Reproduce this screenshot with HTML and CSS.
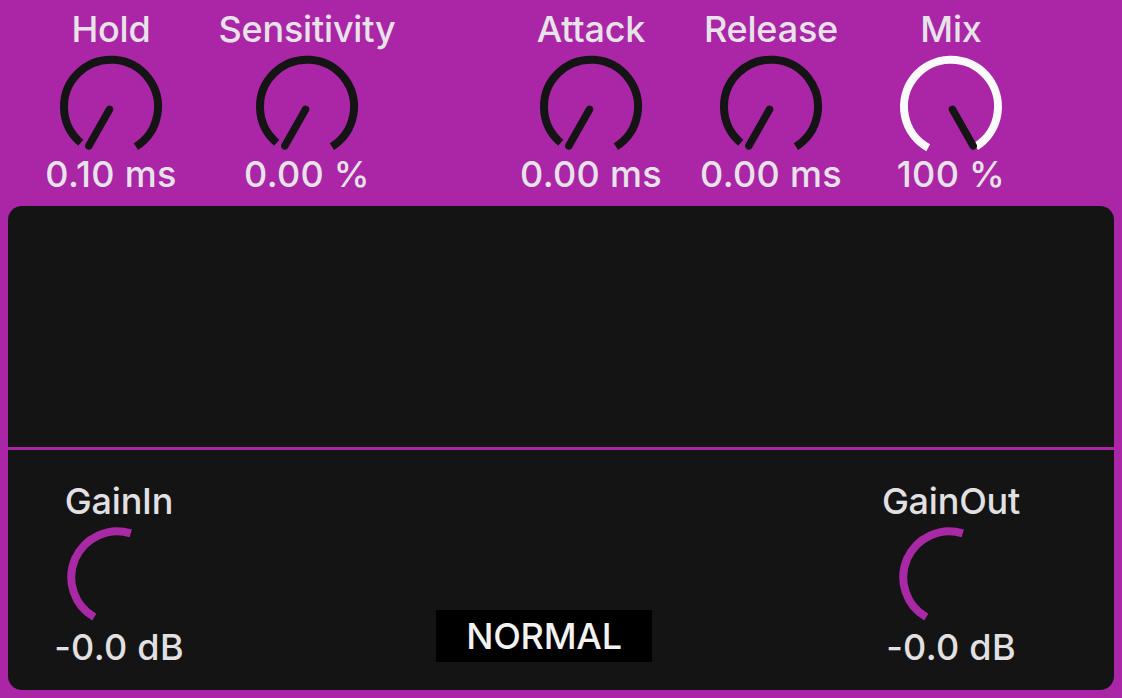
FILE: index.html
```html
<!DOCTYPE html>
<html>
<head>
<meta charset="utf-8">
<link rel="stylesheet" href="styles.css">
</head>
<body>
<div class="device">
  <div class="top-row">
    <div class="knob-col">
      <div class="label">Hold</div>
      <svg class="dial" viewBox="0 0 110 100" width="110" height="100">
        <path d="M24.79 90.70 A47 47 0 1 1 79.91 94.56" class="track"/>
        <line x1="53.52" y1="57.31" x2="32.84" y2="93.87" class="needle"/>
      </svg>
      <div class="value">0.10 ms</div>
    </div>
    <div class="knob-col sens">
      <div class="label">Sensitivity</div>
      <svg class="dial" viewBox="0 0 110 100" width="110" height="100">
        <path d="M24.79 90.70 A47 47 0 1 1 79.91 94.56" class="track"/>
        <line x1="53.52" y1="57.31" x2="32.84" y2="93.87" class="needle"/>
      </svg>
      <div class="value">0.00 %</div>
    </div>
    <div class="knob-col attack">
      <div class="label">Attack</div>
      <svg class="dial" viewBox="0 0 110 100" width="110" height="100">
        <path d="M24.79 90.70 A47 47 0 1 1 79.91 94.56" class="track"/>
        <line x1="53.52" y1="57.31" x2="32.84" y2="93.87" class="needle"/>
      </svg>
      <div class="value">0.00 ms</div>
    </div>
    <div class="knob-col">
      <div class="label">Release</div>
      <svg class="dial" viewBox="0 0 110 100" width="110" height="100">
        <path d="M24.79 90.70 A47 47 0 1 1 79.91 94.56" class="track"/>
        <line x1="53.52" y1="57.31" x2="32.84" y2="93.87" class="needle"/>
      </svg>
      <div class="value">0.00 ms</div>
    </div>
    <div class="knob-col">
      <div class="label">Mix</div>
      <svg class="dial" viewBox="0 0 110 100" width="110" height="100">
        <path d="M32.21 95.81 A47 47 0 1 1 79.91 94.56" class="track-full"/>
        <line x1="56.48" y1="57.31" x2="77.16" y2="93.87" class="needle"/>
      </svg>
      <div class="value">100 %</div>
    </div>
  </div>
  <div class="panel">
    <div class="display"></div>
    <div class="lower">
      <div class="gain-col">
        <div class="label">GainIn</div>
        <svg class="gdial" viewBox="0 0 110 105" width="110" height="105">
          <path d="M30.3 94.14 A46 46 0 0 1 66.75 10.31" class="garc"/>
        </svg>
        <div class="value">-0.0 dB</div>
      </div>
      <div class="mode">NORMAL</div>
      <div class="gain-col out">
        <div class="label">GainOut</div>
        <svg class="gdial" viewBox="0 0 110 105" width="110" height="105">
          <path d="M30.3 94.14 A46 46 0 0 1 66.75 10.31" class="garc"/>
        </svg>
        <div class="value">-0.0 dB</div>
      </div>
    </div>
  </div>
</div>
</body>
</html>
```

FILE: styles.css
```css
html, body {
  margin: 0;
  padding: 0;
}
body {
  width: 1122px;
  height: 698px;
  overflow: hidden;
  background: #aa26a7;
  font-family: Inter, "Liberation Sans", sans-serif;
  font-weight: 500;
}
.device {
  display: flex;
  flex-direction: column;
}
.top-row {
  display: flex;
  height: 206px;
  box-sizing: border-box;
  padding-top: 9px;
  padding-left: 21px;
}
.knob-col {
  width: 180px;
  display: flex;
  flex-direction: column;
  align-items: center;
}
.knob-col.sens { margin-left: 16px; }
.knob-col.attack { margin-left: 104px; }
.label, .value {
  font-size: 36px;
  line-height: 40px;
  color: #e8e3e8;
  white-space: nowrap;
  letter-spacing: -0.2px;
}
.value { letter-spacing: 0.3px; }
.dial {
  display: block;
  margin-top: 3px;
}
.knob-col .value { margin-top: 2px; }
.track {
  fill: none;
  stroke: #141414;
  stroke-width: 8;
}
.track-full {
  fill: none;
  stroke: #fafafa;
  stroke-width: 8;
}
.needle {
  stroke: #141414;
  stroke-width: 7.5;
  stroke-linecap: round;
}
.panel {
  margin: 0 8px;
  height: 484px;
  background: #141414;
  border-radius: 14px;
  display: flex;
  flex-direction: column;
  overflow: hidden;
}
.display {
  height: 241px;
  border-bottom: 3px solid #aa26a7;
}
.lower {
  display: flex;
  align-items: flex-start;
  padding-left: 31px;
  height: 240px;
}
.gain-col {
  width: 160px;
  display: flex;
  flex-direction: column;
  align-items: center;
  padding-top: 31px;
}
.gain-col .label, .gain-col .value {
  color: #e2e0e2;
}
.gdial { display: block; margin-top: 2px; }
.gain-col .value { margin-top: -1px; }
.garc {
  fill: none;
  stroke: #a928a6;
  stroke-width: 8;
}
.mode {
  margin-left: 237px;
  margin-top: 160px;
  width: 216px;
  height: 52px;
  background: #000;
  color: #f2f2f2;
  font-size: 36px;
  line-height: 52px;
  text-align: center;
  letter-spacing: -0.2px;
}
.gain-col.out { margin-left: 219px; }
```
